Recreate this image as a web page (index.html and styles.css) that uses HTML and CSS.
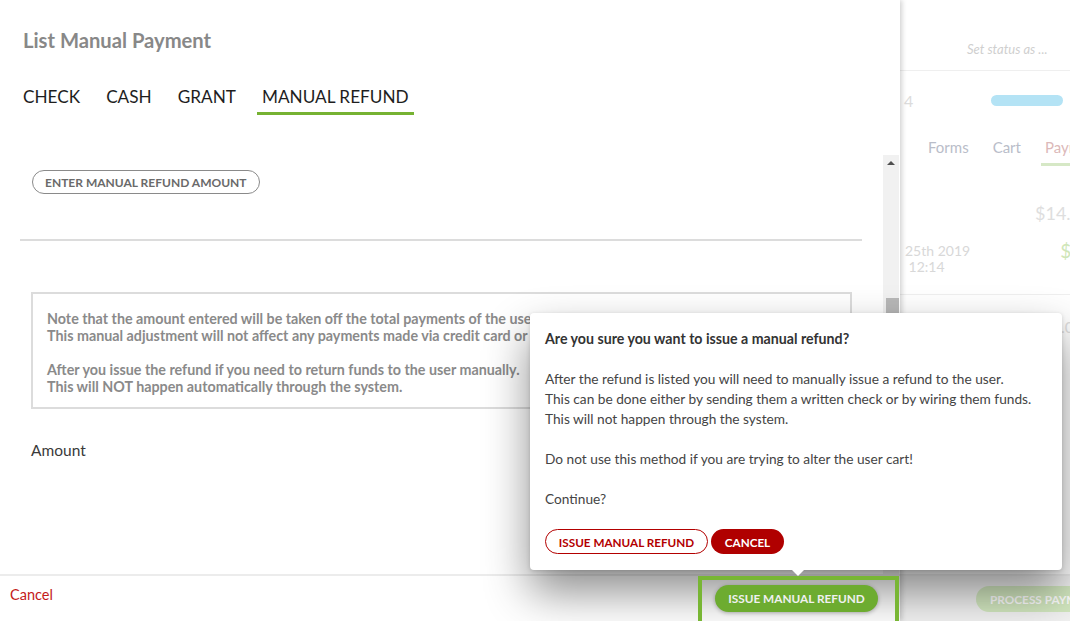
FILE: index.html
```html
<!DOCTYPE html>
<html lang="en">
<head>
<meta charset="UTF-8">
<meta name="viewport" content="width=device-width, initial-scale=1.0">
<title>List Manual Payment</title>
<link rel="stylesheet" href="styles.css">
</head>
<body>
<div class="app">
  <aside class="drawer">
    <div class="drawer-head">
      <h2 class="drawer-title">List Manual Payment</h2>
      <div class="tabs">
        <a class="tab">CHECK</a>
        <a class="tab">CASH</a>
        <a class="tab">GRANT</a>
        <a class="tab active">MANUAL REFUND</a>
      </div>
    </div>

    <div class="drawer-body">
      <div class="scroll-content">
        <button class="pill-outline">ENTER MANUAL REFUND AMOUNT</button>
        <hr class="divider">
        <div class="note">
          <p>Note that the amount entered will be taken off the total payments of the user.<br>
          This manual adjustment will not affect any payments made via credit card or check.</p>
          <p>After you issue the refund if you need to return funds to the user manually.<br>
          This will NOT happen automatically through the system.</p>
        </div>
        <label class="field-label" for="amount">Amount</label>
      </div>
      <div class="scrollbar">
        <span class="scroll-arrow"></span>
        <span class="scroll-thumb"></span>
      </div>
    </div>

    <div class="drawer-foot">
      <a class="cancel-link">Cancel</a>
      <!-- confirm popover sits over the footer button -->
      <div class="popover">
        <p class="popover-title">Are you sure you want to issue a manual refund?</p>
        <p>After the refund is listed you will need to manually issue a refund to the user.<br>
        This can be done either by sending them a written check or by wiring them funds.<br>
        This will not happen through the system.</p>
        <p>Do not use this method if you are trying to alter the user cart!</p>
        <p>Continue?</p>
        <div class="popover-actions">
          <button class="btn-red-outline">ISSUE MANUAL REFUND</button>
          <button class="btn-red">CANCEL</button>
        </div>
        <span class="popover-arrow"></span>
      </div>
      <div class="highlight">
        <button class="btn-green">ISSUE MANUAL REFUND</button>
      </div>
    </div>
  </aside>

  <main class="page">
    <div class="status-bar">Set status as ...</div>
    <div class="summary-row">
      <span class="count">4</span>
      <span class="progress"></span>
    </div>
    <div class="page-tabs">
      <span>Forms</span>
      <span>Cart</span>
      <span class="current">Payments</span>
    </div>
    <div class="total">$14.75</div>
    <div class="pay-row">
      <div class="pay-date">25th 2019<br>&nbsp;12:14</div>
      <div class="pay-amount">$</div>
    </div>
    <div class="pay-row2">.00</div>
    <div class="page-foot">
      <button class="btn-process">PROCESS PAYMENT</button>
    </div>
  </main>
</div>
</body>
</html>
```

FILE: styles.css
```css
html, body {
  margin: 0;
  padding: 0;
  height: 621px;
  overflow: hidden;
  font-family: Lato, "Open Sans", sans-serif;
  background-color: #fff;
}
.app {
  display: flex;
  height: 621px;
}

/* left drawer */
.drawer {
  width: 900px;
  flex: none;
  display: flex;
  flex-direction: column;
  background-color: #fff;
  box-shadow: 2px 0 5px rgba(0, 0, 0, 0.18);
  position: relative;
  z-index: 2;
}
.drawer-head {
  height: 155px;
  flex: none;
  padding-top: 28px;
  box-sizing: border-box;
}
.drawer-title {
  margin: 0 0 34px 23px;
  font-size: 20.2px;
  line-height: 24px;
  font-weight: 700;
  color: #888;
}
.tabs {
  display: flex;
  gap: 16px;
  padding-left: 18px;
}
.tab {
  padding: 0 5px 4px 5px;
  font-size: 17.2px;
  line-height: 22px;
  color: #1e1e1e;
  border-bottom: 3px solid transparent;
}
.tab.active {
  border-bottom-color: #76b232;
}

.drawer-body {
  flex: 1;
  display: flex;
  min-height: 0;
}
.scroll-content {
  flex: 1;
  padding: 15px 21px 0 20px;
}
.pill-outline {
  margin-left: 12px;
  height: 24px;
  padding: 0 12px;
  border: 1px solid #8a8a8a;
  border-radius: 12px;
  background: #fff;
  font-family: Lato, sans-serif;
  font-size: 12px;
  font-weight: 700;
  color: #6a6a6a;
}
.divider {
  margin: 45px 0 0 0;
  border: none;
  border-top: 2px solid #dcdcdc;
}
.note {
  margin: 51px 10px 0 11px;
  padding: 10px 14px 6px 14px;
  border: 2px solid #dcdcdc;
  font-size: 14.3px;
  line-height: 17px;
  font-weight: 700;
  color: #8a8a8a;
  white-space: nowrap;
  overflow: hidden;
}
.note p {
  margin: 6px 0 17px 0;
}
.note p:last-child {
  margin-bottom: 6px;
}
.field-label {
  display: block;
  margin: 32px 0 0 11px;
  font-size: 15.5px;
  line-height: 18px;
  color: #3a3a3a;
}

.scrollbar {
  width: 16px;
  flex: none;
  margin-right: 1px;
  background-color: #f1f1f1;
  display: flex;
  flex-direction: column;
  align-items: center;
}
.scroll-arrow {
  margin-top: 6px;
  width: 0;
  height: 0;
  border-left: 4px solid transparent;
  border-right: 4px solid transparent;
  border-bottom: 4px solid #505050;
}
.scroll-thumb {
  margin-top: 133px;
  margin-left: 2px;
  width: 13px;
  height: 16px;
  background-color: #b8b8b8;
}

.drawer-foot {
  height: 47px;
  flex: none;
  box-sizing: border-box;
  border-top: 2px solid #ececec;
  display: flex;
  justify-content: space-between;
  align-items: flex-start;
  padding: 0 1px 0 10px;
  position: relative;
}
.cancel-link {
  margin-top: 10px;
  font-size: 14.5px;
  line-height: 17px;
  color: #c41a1a;
}
.highlight {
  position: relative;
  z-index: 2;
  border: 4px solid #78b634;
  padding: 5px 17px 14px 13px;
}
.btn-green {
  width: 163px;
  height: 27px;
  border: none;
  border-radius: 14px;
  background-color: #6dac30;
  color: #f0f0f0;
  font-family: Lato, sans-serif;
  font-size: 11.8px;
  font-weight: 700;
  box-shadow: 0 1px 4px rgba(0, 0, 0, 0.3);
}

/* confirmation popover */
.popover {
  position: absolute;
  z-index: 1;
  left: 530px;
  bottom: 51px;
  width: 532px;
  box-sizing: border-box;
  padding: 16px 15px 16px 15px;
  background-color: #fff;
  border-radius: 4px;
  box-shadow: 0 22px 45px rgba(0, 0, 0, 0.45), 0 1px 4px rgba(0, 0, 0, 0.15);
  font-size: 13.7px;
  line-height: 20px;
  color: #444;
}
.popover p {
  margin: 0 0 20px 0;
}
.popover .popover-title {
  font-size: 14.2px;
  font-weight: 700;
  color: #333;
}
.popover-actions {
  display: flex;
  gap: 3px;
}
.btn-red-outline,
.btn-red {
  height: 25px;
  border-radius: 13px;
  font-family: Lato, sans-serif;
  font-size: 11.7px;
  font-weight: 700;
}
.btn-red-outline {
  width: 163px;
  border: 1px solid #b30000;
  background: #fff;
  color: #b30000;
}
.btn-red {
  width: 73px;
  border: none;
  background-color: #b00000;
  color: #fff;
}
.popover-arrow {
  position: absolute;
  left: 262px;
  bottom: -6px;
  width: 0;
  height: 0;
  border-left: 6px solid transparent;
  border-right: 6px solid transparent;
  border-top: 6px solid #fff;
}

/* faded page behind the drawer */
.page {
  flex: 1;
  overflow: hidden;
  display: flex;
  flex-direction: column;
  white-space: nowrap;
  position: relative;
  z-index: 1;
}
.status-bar {
  height: 71px;
  flex: none;
  box-sizing: border-box;
  border-bottom: 1px solid #efefef;
  padding: 40px 0 0 67px;
  font-size: 13px;
  line-height: 18px;
  font-style: italic;
  color: #cfcfcf;
}
.summary-row {
  display: flex;
  align-items: center;
  margin-top: 19px;
  height: 20px;
  padding-left: 4px;
}
.count {
  font-size: 16px;
  color: #dcdcdc;
}
.progress {
  margin-left: 78px;
  width: 72px;
  height: 11px;
  border-radius: 6px;
  background-color: #b4e3f5;
}
.page-tabs {
  display: flex;
  gap: 24px;
  margin-top: 27px;
  padding-left: 28px;
  font-size: 15px;
  line-height: 20px;
  color: #b9bdc9;
}
.page-tabs span {
  padding: 0 0 6px 0;
}
.page-tabs .current {
  padding: 0 4px 6px 4px;
  margin-left: -4px;
  color: #dcb9b9;
  border-bottom: 3px solid #d6e8c6;
}
.total {
  margin-top: 36px;
  padding-left: 135px;
  font-size: 18px;
  line-height: 22px;
  color: #dedede;
}
.pay-row {
  display: flex;
  margin-top: 19px;
  padding-left: 5px;
}
.pay-date {
  font-size: 14px;
  line-height: 16px;
  color: #d8d8d8;
}
.pay-amount {
  margin-left: 90px;
  margin-top: -4px;
  font-size: 19px;
  color: #cfe6b8;
}
.pay-row2 {
  margin-top: 19px;
  border-top: 1px solid #efefef;
  padding: 22px 0 0 161px;
  font-size: 16px;
  color: #dedede;
}
.page-foot {
  margin-top: auto;
  height: 47px;
  box-sizing: border-box;
  border-top: 2px solid #ececec;
  padding: 10px 0 0 76px;
  background-color: #f2f2f2;
}
.btn-process {
  width: 150px;
  height: 26px;
  border: none;
  border-radius: 13px;
  background-color: #d3e8c0;
  color: #fff;
  font-family: Lato, sans-serif;
  font-size: 11.8px;
  font-weight: 700;
  text-align: left;
  padding-left: 14px;
}
```
